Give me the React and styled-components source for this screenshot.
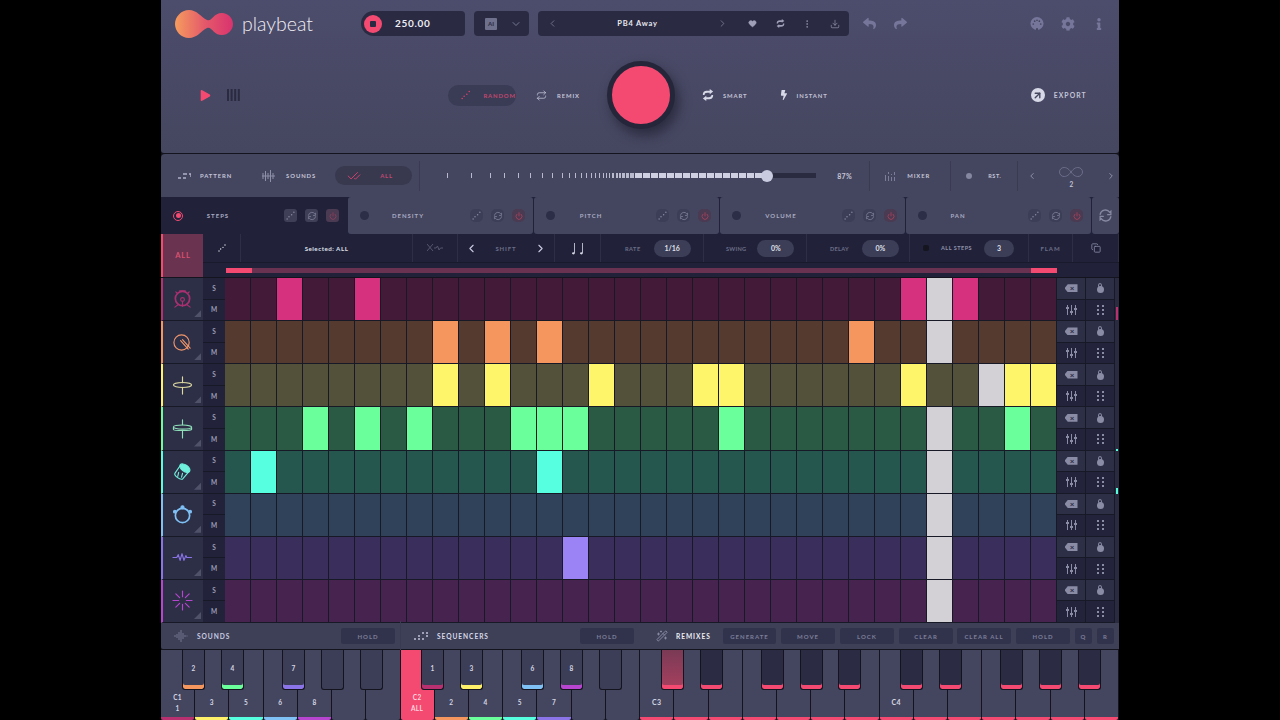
import React from 'react';
import styled, { createGlobalStyle } from 'styled-components';
import {
  ChevronLeft, ChevronRight, ChevronDown, Heart, MoreVertical, Download, CheckCheck, Power, Copy, Wand2, Repeat, ArrowUpRight,
} from 'lucide-react';
import { FaReply, FaShare, FaCog, FaInfo, FaBolt, FaPlay } from 'react-icons/fa';

const PINK = '#f44a72';

const tracks = [
  { color: '#b8306f', glyph: '#a83070', base: '#431a38', on: '#d6317f', hits: [2, 5, 26, 28], head: 27, icon: 'kick' },
  { color: '#f5965f', glyph: '#f0966a', base: '#553a30', on: '#f5965f', hits: [8, 10, 12, 24], head: 27, icon: 'snare' },
  { color: '#fff06a', glyph: '#dcd8a0', base: '#54513a', on: '#fff56a', hits: [8, 10, 14, 18, 19, 26, 30, 31], head: 29, icon: 'ride' },
  { color: '#6bff9c', glyph: '#8fe0b8', base: '#2b5a44', on: '#6bff9c', hits: [3, 5, 7, 11, 12, 13, 19, 30], head: 27, icon: 'hat' },
  { color: '#55ffe0', glyph: '#6ff0dc', base: '#25574f', on: '#55ffe0', hits: [1, 12], head: 27, icon: 'tom' },
  { color: '#7fc0f5', glyph: '#7fc0f5', base: '#2f4259', on: '#7fc0f5', hits: [], head: 27, icon: 'tamb' },
  { color: '#8b74e8', glyph: '#8b74e8', base: '#392e5c', on: '#9b82f5', hits: [13], head: 27, icon: 'wave' },
  { color: '#b845d0', glyph: '#b845d0', base: '#47234f', on: '#b845d0', hits: [], head: 27, icon: 'spark' },
];

const lanes = [
  { name: 'DENSITY', shift: 3 },
  { name: 'PITCH', shift: 0 },
  { name: 'VOLUME', shift: 4 },
  { name: 'PAN', shift: -5 },
];

const sliderTicks = [
  [0, 1], [23, 1], [18, 1], [13, 1], [13, 1], [11, 1], [11, 1], [9, 1], [9, 1], [6, 1], [5, 1], [5, 1], [4, 1],
  [4, 1], [3, 1], [3, 1], [3, 1], [2, 1], [2, 1], [2, 2], [2, 2], [1, 2], [1, 3], [1, 3], [1, 4],
];

const whiteKeys = [
  { note: 'C1', label: '1', strip: '#b8306f' }, { label: '3', strip: '#fff06a' }, { label: '5', strip: '#55ffe0' },
  { label: '6', strip: '#7fc0f5' }, { label: '8', strip: '#b845d0' }, {}, {},
  { note: 'C2', label: 'ALL', strip: PINK, lit: true }, { label: '2', strip: '#f5965f' }, { label: '4', strip: '#6bff9c' },
  { label: '5', strip: '#55ffe0' }, { label: '7', strip: '#8b74e8' }, {}, {},
  { tone: 'C3', strip: PINK }, { strip: PINK }, { strip: PINK }, { strip: PINK }, { strip: PINK }, { strip: PINK }, { strip: PINK },
  { tone: 'C4', strip: PINK }, { strip: PINK }, { strip: PINK }, { strip: PINK }, { strip: PINK }, { strip: PINK }, { strip: PINK },
];

const blackKeys = [
  { x: 21, label: '2', strip: '#f5965f' }, { x: 60, label: '4', strip: '#6bff9c' }, { x: 121, label: '7', strip: '#8b74e8' },
  { x: 160 }, { x: 199 },
  { x: 260, label: '1', strip: '#b8306f' }, { x: 299, label: '3', strip: '#fff06a' }, { x: 360, label: '6', strip: '#7fc0f5' },
  { x: 399, label: '8', strip: '#b845d0' }, { x: 438 },
  { x: 500, strip: PINK, glow: true }, { x: 539, strip: PINK }, { x: 600, strip: PINK }, { x: 639, strip: PINK }, { x: 677, strip: PINK },
  { x: 739, strip: PINK }, { x: 778, strip: PINK }, { x: 839, strip: PINK }, { x: 878, strip: PINK }, { x: 917, strip: PINK },
];

const GlobalStyle = createGlobalStyle`
  html, body {
    margin: 0;
    background: #000;
    font-family: "Lato", "Liberation Sans", sans-serif;
  }
`;

const Logo = () => (
  <svg width="58" height="30" viewBox="0 0 58 30">
    <defs>
      <linearGradient id="logoFill" x1="0" x2="1" y1="0" y2="0">
        <stop offset="0" stopColor="#f59c5e" />
        <stop offset="0.5" stopColor="#e55a6a" />
        <stop offset="1" stopColor="#d8336e" />
      </linearGradient>
    </defs>
    <path fill="url(#logoFill)" d="M14 1C22 1 26 8 32 11C37 13 38 4 47 4C53 4 58 9 58 15C58 21 53 26 47 26C38 26 37 17 32 19C26 22 22 29 14 29C6 29 0 22 0 15C0 8 6 1 14 1Z" />
  </svg>
);

const Dots = ({ color = '#c9cbe0', size = 12 }) => (
  <svg width={size} height={size} viewBox="0 0 12 12" fill={color}>
    <circle cx="1.500" cy="10.500" r="1" /><circle cx="4" cy="7.500" r="1" /><circle cx="7.500" cy="5" r="1" /><circle cx="10.500" cy="1.500" r="1" />
  </svg>
);

const Cycle = ({ size = 12, color = '#c9cbe0', width = 1.2 }) => (
  <svg width={size} height={size} viewBox="0 0 14 14" fill="none" stroke={color} strokeWidth={width} strokeLinecap="round">
    <path d="M2 6a5 5 0 0 1 9-2l1-1v3.200H9" /><path d="M12 8a5 5 0 0 1-9 2l-1 1V7.800h3" />
  </svg>
);

const Swap = ({ size = 12, color = '#c9cbe0' }) => (
  <svg width={size} height={size} viewBox="0 0 14 14" fill={color}>
    <path d="M1 7C1 3 3 2 6 2h3V0l4 3-4 3V4.500H6C4 4.500 3 5.500 3 7Z" />
    <path d="M13 7c0 4-2 5-5 5H5v2l-4-3 4-3v1.500h3c2 0 3-1 3-2.500Z" />
  </svg>
);

const Bars = ({ color = '#2a2b40' }) => (
  <svg width="13" height="12" viewBox="0 0 13 12" fill={color}>
    <rect x="0" width="2" height="12" /><rect x="3.600" width="2" height="12" /><rect x="7.200" width="2" height="12" /><rect x="10.800" width="2" height="12" />
  </svg>
);

const MidiPort = () => (
  <svg width="15" height="15" viewBox="0 0 15 15">
    <circle cx="7.500" cy="7.500" r="7" fill="#75769a" />
    <g fill="#45465f">
      <circle cx="3.500" cy="8" r="0.900" /><circle cx="5" cy="5" r="0.900" /><circle cx="7.500" cy="4" r="0.900" />
      <circle cx="10" cy="5" r="0.900" /><circle cx="11.500" cy="8" r="0.900" />
      <rect x="6.500" y="12.500" width="2" height="2" />
    </g>
  </svg>
);

const TrackGlyph = ({ kind, color }) => {
  const stroke = { fill: 'none', stroke: color, strokeWidth: 1.2, strokeLinecap: 'round', strokeLinejoin: 'round' };
  return (
    <svg width="21" height="21" viewBox="0 0 22 22" {...stroke}>
      {kind === 'kick' && (
        <>
          <circle cx="11" cy="10" r="7.500" strokeWidth="1.800" />
          <circle cx="11" cy="11" r="2" />
          <path d="M11 13v5M3 19l4-3M19 19l-4-3M4 3l2 2M18 3l-2 2M8 2h6" />
        </>
      )}
      {kind === 'snare' && (
        <>
          <circle cx="10" cy="11" r="8" />
          <path d="M9 9l8 9M11 8l8 9" />
        </>
      )}
      {kind === 'ride' && (
        <>
          <ellipse cx="11" cy="10.500" rx="9.500" ry="2.600" />
          <path d="M11 2v6M11 13v7" />
        </>
      )}
      {kind === 'hat' && (
        <>
          <ellipse cx="11" cy="9.500" rx="9.500" ry="2.200" />
          <path d="M1.500 10v2c0 1.500 19 1.500 19 0v-2M11 2v5M11 14v7" />
        </>
      )}
      {kind === 'tom' && (
        <>
          <ellipse cx="13.500" cy="7.500" rx="6" ry="3.400" transform="rotate(35 13.500 7.500)" fill={color} />
          <path d="M8.500 5 3 13c-1 2 5 7 8 6l6-7M7 12l-1 4M11 13l-1 4" />
        </>
      )}
      {kind === 'tamb' && (
        <>
          <circle cx="11" cy="12" r="7.500" strokeWidth="1.800" />
          <circle cx="11" cy="3.500" r="1.600" fill={color} />
          <circle cx="3" cy="8" r="1.400" fill={color} />
          <circle cx="19" cy="8" r="1.400" fill={color} />
        </>
      )}
      {kind === 'wave' && <path d="M1 11h4l1.500-3 2 6 2-7 2 7 2-5 1 2h5" />}
      {kind === 'spark' && (
        <path d="M11 1v6M11 15v6M1 11h6M15 11h6M4 4l4 4M18 4l-4 4M4 18l4-4M18 18l-4-4" />
      )}
    </svg>
  );
};

const Page = styled.div`
  width: 958px;
  height: 720px;
  margin: 0 auto;
  background: #14141f;
  overflow: hidden;
  display: flex;
  flex-direction: column;
`;

const Header = styled.header`
  height: 153px;
  flex: none;
  box-sizing: border-box;
  padding-top: 11px;
  background: linear-gradient(180deg, #4c4c6c 0%, #45465f 100%);
  border-bottom-left-radius: 3px;
  border-bottom-right-radius: 3px;
`;

const TopRow = styled.div`
  display: flex;
  align-items: center;
  height: 25px;
  padding-left: 14px;
  & > * { flex: none; }
`;

const Brand = styled.div`
  display: flex;
  align-items: center;
  width: 186px;
  gap: 9px;
`;

const BrandName = styled.span`
  font-size: 19.500px;
  font-weight: 300;
  color: #f0eef4;
`;

const TempoBox = styled.div`
  width: 104px;
  height: 25px;
  border-radius: 13px 4px 4px 13px;
  background: #2a2b42;
  display: flex;
  align-items: center;
  gap: 13px;
  padding-left: 3px;
  box-sizing: border-box;
`;

const StopButton = styled.div`
  width: 18px;
  height: 18px;
  border-radius: 50%;
  background: ${PINK};
  display: flex;
  align-items: center;
  justify-content: center;
  &::after {
    content: '';
    width: 6px;
    height: 6px;
    border-radius: 1px;
    background: #2a2b42;
  }
`;

const TempoValue = styled.span`
  color: #eeeef4;
  font-size: 10px;
  font-weight: 700;
  letter-spacing: 0.7px;
  margin-top: -2px;
`;

const DarkBox = styled.div`
  height: 25px;
  width: ${(p) => p.$w}px;
  margin-left: 9px;
  background: #2a2b42;
  border-radius: 4px;
  display: flex;
  align-items: center;
  box-sizing: border-box;
  padding: ${(p) => p.$pad || '0'};
  gap: ${(p) => p.$gap || '0'};
  color: #8b8ca8;
`;

const AiChip = styled.span`
  width: 12px;
  height: 12px;
  background: #70718c;
  border-radius: 1px;
  color: #2f3048;
  font-size: 6px;
  font-weight: 900;
  display: flex;
  align-items: center;
  justify-content: center;
`;

const PresetName = styled.span`
  width: 159px;
  text-align: center;
  color: #e9e9f0;
  font-size: 7.500px;
  font-weight: 700;
  letter-spacing: 0.8px;
`;

const HeadIcon = styled.span`
  display: flex;
  align-items: center;
  justify-content: center;
  margin-left: ${(p) => p.$ml || 0}px;
  width: ${(p) => p.$w || 14}px;
  color: ${(p) => p.$color || '#75769a'};
`;

const ModeRow = styled.div`
  display: flex;
  align-items: center;
  height: 68px;
  margin-top: 25px;
  padding-left: 38px;
  & > * { flex: none; }
`;

const ModeButton = styled.div`
  display: flex;
  align-items: center;
  gap: ${(p) => p.$gap || 10}px;
  margin-left: ${(p) => p.$ml || 0}px;
  ${(p) => p.$active && `
    height: 21px;
    width: 68px;
    box-sizing: border-box;
    padding-left: 13px;
    border-radius: 11px;
    background: #3a3b55;
  `}
`;

const Label = styled.span`
  font-size: ${(p) => p.$size || 5.900}px;
  font-weight: 700;
  letter-spacing: ${(p) => p.$ls || 0.900}px;
  color: ${(p) => p.$color || '#c4c5d8'};
  white-space: nowrap;
`;

const BigButton = styled.div`
  width: 58px;
  height: 58px;
  border-radius: 50%;
  background: ${PINK};
  border: 5px solid #25263a;
  margin-left: 27px;
  box-shadow: 4px 6px 12px rgba(20, 20, 35, 0.55);
`;

const ExportDisc = styled.span`
  width: 14px;
  height: 14px;
  border-radius: 50%;
  background: #d8d9e8;
  display: flex;
  align-items: center;
  justify-content: center;
`;

const Toolbar = styled.div`
  height: 43px;
  flex: none;
  margin-top: 1px;
  background: #44465f;
  border-radius: 4px 4px 0 0;
  display: flex;
  align-items: center;
  & > * { flex: none; }
`;

const ToolItem = styled.div`
  display: flex;
  align-items: center;
  gap: ${(p) => p.$gap || 9}px;
  margin-left: ${(p) => p.$ml || 0}px;
  color: #9a9bb6;
`;

const AllPill = styled.div`
  width: 77px;
  height: 19px;
  margin-left: 19px;
  border-radius: 10px;
  background: #38394f;
  display: flex;
  align-items: center;
  gap: 19px;
  padding-left: 12px;
  box-sizing: border-box;
`;

const Rule = styled.span`
  width: 1px;
  height: 30px;
  background: #3a3b52;
  margin-left: ${(p) => p.$ml || 0}px;
`;

const Slider = styled.div`
  position: relative;
  margin-left: 27px;
  width: 369px;
  height: 7px;
  display: flex;
  align-items: center;
`;

const Tick = styled.span`
  flex: none;
  height: 5px;
  width: ${(p) => p.$w}px;
  background: #b9bace;
`;

const Blocks = styled.div`
  display: flex;
  flex: none;
  gap: 1px;
  margin-left: 1px;
`;

const Block = styled.span`
  width: 7px;
  height: 5px;
  background: #cfd0e2;
`;

const SliderRest = styled.span`
  flex: 1;
  height: 5px;
  background: #2a2b40;
`;

const Knob = styled.span`
  position: absolute;
  left: 314px;
  top: -2.500px;
  width: 12px;
  height: 12px;
  border-radius: 50%;
  background: #c9cbe0;
`;

const ToolDot = styled.span`
  width: 6px;
  height: 6px;
  border-radius: 50%;
  background: #85869f;
`;

const InfinityBox = styled.div`
  margin-left: 18px;
  width: 32px;
  display: flex;
  flex-direction: column;
  align-items: center;
  gap: 4px;
  margin-top: 3px;
`;

const LaneRow = styled.div`
  height: 37px;
  flex: none;
  display: flex;
  background: #21223a;
`;

const StepsLane = styled.div`
  width: 186px;
  display: flex;
  align-items: center;
  padding-left: 12px;
  box-sizing: border-box;
`;

const RecordDot = styled.span`
  width: 10px;
  height: 10px;
  border-radius: 50%;
  border: 1.500px solid ${PINK};
  box-sizing: border-box;
  display: flex;
  align-items: center;
  justify-content: center;
  &::after {
    content: '';
    width: 5px;
    height: 5px;
    border-radius: 50%;
    background: ${PINK};
  }
`;

const Lane = styled.div`
  width: 185px;
  margin-left: 1px;
  background: #44465f;
  border-radius: 3px;
  display: flex;
  align-items: center;
  padding-left: 12px;
  box-sizing: border-box;
`;

const LaneDot = styled.span`
  width: 9px;
  height: 9px;
  border-radius: 50%;
  background: #2c2d46;
`;

const LaneTitle = styled.span`
  width: 72px;
  text-align: center;
  margin-left: ${(p) => p.$ml || 0}px;
  font-size: 6px;
  font-weight: 700;
  letter-spacing: 1px;
  color: #a9aac2;
`;

const LaneActions = styled.div`
  display: flex;
  gap: 8px;
  margin-left: auto;
  margin-right: 8px;
`;

const LaneButton = styled.span`
  width: 13px;
  height: 13px;
  border-radius: ${(p) => p.$radius || 5}px;
  background: ${(p) => p.$bg || '#3c3d57'};
  display: flex;
  align-items: center;
  justify-content: center;
`;

const RefreshTab = styled.div`
  flex: 1;
  margin-left: 1px;
  background: #44465f;
  border-radius: 3px;
  display: flex;
  align-items: center;
  justify-content: center;
`;

const OptionArea = styled.div`
  height: 43px;
  flex: none;
  display: flex;
`;

const AllTile = styled.div`
  width: 42px;
  box-sizing: border-box;
  border-left: 2px solid ${PINK};
  background: #6a3350;
  display: flex;
  align-items: center;
  justify-content: center;
`;

const OptionColumn = styled.div`
  flex: 1;
  display: flex;
  flex-direction: column;
  background: #21223a;
`;

const OptionBar = styled.div`
  height: 29px;
  display: flex;
  border-bottom: 1px solid #191a2b;
  box-sizing: border-box;
`;

const OptionCell = styled.div`
  width: ${(p) => p.$w}px;
  box-sizing: border-box;
  border-right: 1px solid #2e2f46;
  display: flex;
  align-items: center;
  justify-content: ${(p) => (p.$pl ? 'flex-start' : 'center')};
  padding-left: ${(p) => p.$pl || 0}px;
  gap: ${(p) => p.$gap || 0}px;
  color: #8c8da8;
`;

const ValuePill = styled.span`
  width: ${(p) => p.$w || 37}px;
  height: 17px;
  border-radius: 9px;
  background: #3c3d56;
  color: #dfe0ea;
  font-size: 7px;
  font-weight: 700;
  display: flex;
  align-items: center;
  justify-content: center;
`;

const SquareDot = styled.span`
  width: 6px;
  height: 6px;
  border-radius: 2px;
  background: #14151f;
`;

const ProgressRow = styled.div`
  height: 14px;
  display: flex;
  align-items: center;
  padding-left: 23px;
`;

const ProgressTrack = styled.div`
  width: 831px;
  height: 5px;
  background: #693250;
  display: flex;
  justify-content: space-between;
`;

const ProgressHandle = styled.span`
  width: 26px;
  background: ${PINK};
`;

const GridArea = styled.div`
  margin-top: 1px;
  flex: none;
  display: flex;
  background: #181927;
`;

const TrackColumn = styled.div`
  flex: 1;
`;

const TrackRow = styled.div`
  height: 43.125px;
  display: flex;
`;

const TrackTile = styled.div`
  position: relative;
  width: 42px;
  box-sizing: border-box;
  border-left: 2px solid ${(p) => p.$color};
  border-bottom: 1px solid #181927;
  background: #2d2f47;
  display: flex;
  align-items: center;
  justify-content: center;
  padding-right: 2px;
  &::after {
    content: '';
    position: absolute;
    right: 2px;
    bottom: 3px;
    width: 7px;
    height: 7px;
    background: #50526a;
    clip-path: polygon(100% 0, 100% 100%, 0 100%);
  }
`;

const SoloColumn = styled.div`
  width: 22px;
  display: flex;
  flex-direction: column;
`;

const SoloCell = styled.div`
  flex: 1;
  background: #22233a;
  border-bottom: 1px solid #181927;
  display: flex;
  align-items: center;
  justify-content: center;
  color: #9c9db6;
  font-size: 6.500px;
  font-weight: 700;
`;

const Steps = styled.div`
  display: grid;
  grid-template-columns: repeat(32, 26px);
  width: 832px;
`;

const Step = styled.div`
  background: ${(p) => p.$bg};
  border-right: 1px solid #181927;
  border-bottom: 1px solid #181927;
`;

const SideColumn = styled.div`
  width: 58px;
  display: grid;
  grid-template-columns: 1fr 1fr;
  grid-template-rows: 1fr 1fr;
`;

const SideCell = styled.div`
  background: ${(p) => (p.$top ? '#2d2f47' : '#23243b')};
  border-right: 1px solid #181927;
  border-bottom: 1px solid #181927;
  display: flex;
  align-items: center;
  justify-content: center;
`;

const EraseTag = styled.span`
  width: 13px;
  height: 8px;
  background: #8a8ba5;
  clip-path: polygon(25% 0, 100% 0, 100% 100%, 25% 100%, 0 50%);
  color: #2d2f47;
  font-size: 8px;
  font-weight: 900;
  line-height: 8px;
  text-align: center;
  text-indent: 2px;
`;

const LockBlob = styled.span`
  width: 7px;
  height: 7px;
  margin-top: 3px;
  border-radius: 50%;
  background: #8a8ba5;
  position: relative;
  &::before {
    content: '';
    position: absolute;
    left: 1.500px;
    top: -3px;
    width: 4px;
    height: 5px;
    border-radius: 50%;
    border: 1px solid #8a8ba5;
    box-sizing: border-box;
  }
`;

const GripDots = styled.span`
  display: grid;
  grid-template-columns: 2px 2px;
  gap: 2px 3px;
  & > i {
    width: 2px;
    height: 2px;
    background: #8a8ba5;
  }
`;

const ScrollRail = styled.div`
  width: 4px;
  background: #2a2b40;
  position: relative;
`;

const ScrollMark = styled.span`
  position: absolute;
  left: 1px;
  width: 2px;
  height: ${(p) => p.$h}px;
  top: ${(p) => p.$top}px;
  background: ${(p) => p.$color};
`;

const BottomBar = styled.div`
  height: 26px;
  flex: none;
  display: flex;
  align-items: center;
  background: #3e4058;
  border-bottom-left-radius: 2px;
  & > * { flex: none; }
`;

const BarGroup = styled.div`
  display: flex;
  align-items: center;
  gap: ${(p) => p.$gap || 9}px;
  margin-left: ${(p) => p.$ml || 0}px;
`;

const BarTitle = styled.span`
  width: ${(p) => p.$w}px;
  font-size: 6.600px;
  font-weight: 700;
  letter-spacing: 0.950px;
  color: ${(p) => p.$color || '#c9cbe0'};
  white-space: nowrap;
`;

const BarButton = styled.span`
  width: ${(p) => p.$w || 54}px;
  height: 16px;
  margin-left: ${(p) => p.$ml ?? 5}px;
  border-radius: 2px;
  background: #31334d;
  color: #7d7e98;
  font-size: 6px;
  font-weight: 700;
  letter-spacing: 1px;
  display: flex;
  align-items: center;
  justify-content: center;
`;

const Keyboard = styled.div`
  position: relative;
  height: 70px;
  flex: none;
  margin-top: 1px;
  display: flex;
  background: #14141f;
`;

const WhiteKey = styled.div`
  flex: 1;
  margin-right: 1px;
  box-sizing: border-box;
  border-radius: 0 0 2px 2px;
  background: ${(p) => (p.$lit ? PINK : '#44465f')};
  border-bottom: 3px solid ${(p) => p.$strip || '#44465f'};
  display: flex;
  flex-direction: column;
  justify-content: flex-end;
  align-items: center;
  gap: 4px;
  padding-bottom: ${(p) => (p.$high ? 5 : 11)}px;
  color: ${(p) => (p.$lit ? '#ffd5de' : '#d5d6e4')};
  font-size: 6.500px;
  font-weight: 700;
  letter-spacing: 0.3px;
`;

const ToneName = styled.span`
  align-self: flex-start;
  margin-left: 12px;
  font-size: 7px;
  font-weight: 700;
  color: #d5d6e4;
`;

const BlackKey = styled.div`
  position: absolute;
  top: 0;
  width: 23px;
  height: 40px;
  box-sizing: border-box;
  background: ${(p) => (p.$glow ? 'linear-gradient(180deg, #7a3a55, #a8405f)' : p.$strip === PINK ? '#2b2c43' : '#3c3e57')};
  border: 1px solid #14141f;
  border-top: none;
  border-radius: 0 0 3px 3px;
  box-shadow: inset 0 -4px 0 ${(p) => p.$strip || '#3c3e57'};
  display: flex;
  align-items: center;
  justify-content: center;
  padding-bottom: 3px;
  color: #d5d6e4;
  font-size: 6.500px;
  font-weight: 700;
`;

export default function App() {
  return (
    <Page>
      <GlobalStyle />
      <Header>
        <TopRow>
          <Brand>
            <Logo />
            <BrandName>playbeat</BrandName>
          </Brand>
          <TempoBox>
            <StopButton />
            <TempoValue>250.00</TempoValue>
          </TempoBox>
          <DarkBox $w={55} $pad="0 0 0 11px" $gap="13px">
            <AiChip>AI</AiChip>
            <ChevronDown size={12} strokeWidth={1.5} />
          </DarkBox>
          <DarkBox $w={311} $pad="0 0 0 9px">
            <ChevronLeft size={11} strokeWidth={1.5} />
            <PresetName>PB4 Away</PresetName>
            <HeadIcon $w={11} $color="#8b8ca8"><ChevronRight size={11} strokeWidth={1.5} /></HeadIcon>
            <HeadIcon $ml={19} $w={10} $color="#a0a1b8"><Heart size={9} fill="#a0a1b8" strokeWidth={1} /></HeadIcon>
            <HeadIcon $ml={18} $w={10} $color="#a0a1b8"><Swap size={9} color="#a0a1b8" /></HeadIcon>
            <HeadIcon $ml={17} $w={10} $color="#a0a1b8"><MoreVertical size={10} strokeWidth={1.5} /></HeadIcon>
            <HeadIcon $ml={18} $w={10} $color="#a0a1b8"><Download size={10} strokeWidth={1.5} /></HeadIcon>
          </DarkBox>
          <HeadIcon $ml={13}><FaReply size={13} /></HeadIcon>
          <HeadIcon $ml={17}><FaShare size={13} /></HeadIcon>
          <HeadIcon $ml={123}><MidiPort /></HeadIcon>
          <HeadIcon $ml={17}><FaCog size={14} /></HeadIcon>
          <HeadIcon $ml={17}><FaInfo size={12} /></HeadIcon>
        </TopRow>
        <ModeRow>
          <HeadIcon $w={12} $color={PINK}><FaPlay size={11} /></HeadIcon>
          <HeadIcon $ml={16} $w={13}><Bars /></HeadIcon>
          <ModeButton $ml={208} $active $gap={13}>
            <Dots color="#d9416e" size={10} />
            <Label $color="#c2486f">RANDOM</Label>
          </ModeButton>
          <ModeButton $ml={20}>
            <Repeat size={11} color="#c9cbe0" strokeWidth={1.6} />
            <Label>REMIX</Label>
          </ModeButton>
          <BigButton />
          <ModeButton $ml={27} $gap={9}>
            <Swap size={12} color="#d8d9e8" />
            <Label>SMART</Label>
          </ModeButton>
          <ModeButton $ml={31} $gap={8}>
            <FaBolt size={10} color="#d8d9e8" />
            <Label>INSTANT</Label>
          </ModeButton>
          <ModeButton $ml={203} $gap={9}>
            <ExportDisc><ArrowUpRight size={11} color="#45465f" strokeWidth={3} /></ExportDisc>
            <Label $size={6.800} $ls={1.100}>EXPORT</Label>
          </ModeButton>
        </ModeRow>
      </Header>

      <Toolbar>
        <ToolItem $ml={17}>
          <svg width="13" height="6" viewBox="0 0 13 6" stroke="#b0b1c8" strokeWidth="1.400" fill="none"><path d="M0 5h3M5 5h3M5 1h4M11 1h2v3" /></svg>
          <Label>PATTERN</Label>
        </ToolItem>
        <ToolItem $ml={30} $gap={11}>
          <svg width="13" height="12" viewBox="0 0 13 12" stroke="#8e8fa9" fill="none"><path d="M1 3v6M3.500 1v10M6 3v6M8.500 0v12M11 3v6M0 6h13" /></svg>
          <Label>SOUNDS</Label>
        </ToolItem>
        <AllPill>
          <CheckCheck size={14} color="#d9416e" strokeWidth={1.6} />
          <Label $color="#c2486f">ALL</Label>
        </AllPill>
        <Rule $ml={7} />
        <Slider>
          {sliderTicks.map(([gap, w], i) => (
            <Tick key={i} $w={w} style={{ marginLeft: gap }} />
          ))}
          <Blocks>
            {Array.from({ length: 17 }, (_, i) => <Block key={i} />)}
          </Blocks>
          <SliderRest />
          <Knob />
        </Slider>
        <ToolItem $ml={21}><Label $size={7} $ls={0.400}>87%</Label></ToolItem>
        <Rule $ml={17} />
        <ToolItem $ml={15} $gap={12}>
          <svg width="10" height="10" viewBox="0 0 10 10" fill="#7c7d98"><path d="M0 4h1v6H0zM3 1h1v2H3zM3 5h1v5H3zM6 3h1v1H6zM6 6h1v4H6zM9 1h1v3H9zM9 6h1v4H9z" /></svg>
          <Label>MIXER</Label>
        </ToolItem>
        <Rule $ml={20} />
        <ToolItem $ml={15} $gap={16}>
          <ToolDot />
          <Label $size={5.500} $ls={0.600}>RST.</Label>
        </ToolItem>
        <Rule $ml={16} />
        <ToolItem $ml={9}><ChevronLeft size={10} /></ToolItem>
        <InfinityBox>
          <svg width="24" height="10" viewBox="0 0 24 10" fill="none" stroke="#6d6e8a" strokeWidth="1"><path d="M12 5C9 1 7 .5 5 .5a4.500 4.500 0 0 0 0 9c2 0 4-.5 7-4.500s5-4.500 7-4.500a4.500 4.500 0 0 1 0 9c-2 0-4-.5-7-4.500Z" /></svg>
          <Label $size={6.500} $ls={0.100}>2</Label>
        </InfinityBox>
        <ToolItem $ml={19}><ChevronRight size={10} /></ToolItem>
      </Toolbar>

      <LaneRow>
        <StepsLane>
          <RecordDot />
          <LaneTitle $ml={-1}>STEPS</LaneTitle>
          <LaneActions>
            <LaneButton $radius={3} $bg="#3f4058"><Dots color="#8788a2" size={9} /></LaneButton>
            <LaneButton $radius={3} $bg="#3f4058"><Cycle size={10} color="#7b7c96" /></LaneButton>
            <LaneButton $radius={3} $bg="#4a3a52"><Power size={8} color="#9c4460" /></LaneButton>
          </LaneActions>
        </StepsLane>
        {lanes.map((lane) => (
          <Lane key={lane.name}>
            <LaneDot />
            <LaneTitle style={{ marginLeft: lane.shift }}>{lane.name}</LaneTitle>
            <LaneActions>
              <LaneButton><Dots color="#8788a2" size={9} /></LaneButton>
              <LaneButton><Cycle size={10} color="#7b7c96" /></LaneButton>
              <LaneButton $bg="#4a3a52"><Power size={8} color="#c4455f" /></LaneButton>
            </LaneActions>
          </Lane>
        ))}
        <RefreshTab><Cycle size={15} color="#8788a2" /></RefreshTab>
      </LaneRow>

      <OptionArea>
        <AllTile><Label $color="#d9516f" $size={7.500}>ALL</Label></AllTile>
        <OptionColumn>
          <OptionBar>
            <OptionCell $w={38}><Dots color="#e8e8f0" size={8} /></OptionCell>
            <OptionCell $w={172}><Label $color="#dfe0ea" $size={6.200} $ls={0.500}>Selected: ALL</Label></OptionCell>
            <OptionCell $w={45}>
              <svg width="16" height="8" viewBox="0 0 16 8" fill="none" stroke="#55566f" strokeWidth="1"><path d="M0 0l6 7M6 0 0 7M7 4h2l1.500-2 1.500 4 1.500-2H16" /></svg>
            </OptionCell>
            <OptionCell $w={97} $gap={17}>
              <ChevronLeft size={13} color="#c9cbe0" />
              <Label $color="#6d6e88" $size={6}>SHIFT</Label>
              <ChevronRight size={13} color="#c9cbe0" />
            </OptionCell>
            <OptionCell $w={46}>
              <svg width="12" height="13" viewBox="0 0 12 13" fill="#d8d9e8"><path d="M2 1h.800v10H2zM10 1h.800v10H10z" /><ellipse cx="1.400" cy="11.300" rx="1.400" ry="1.100" /><ellipse cx="9.400" cy="11.300" rx="1.400" ry="1.100" /></svg>
            </OptionCell>
            <OptionCell $w={103} $pl={24} $gap={13}><Label $color="#6d6e88" $size={5.600} $ls={0.500}>RATE</Label><ValuePill>1/16</ValuePill></OptionCell>
            <OptionCell $w={103} $pl={22} $gap={11}><Label $color="#6d6e88" $size={5.600} $ls={0.300}>SWING</Label><ValuePill>0%</ValuePill></OptionCell>
            <OptionCell $w={103} $pl={23} $gap={13}><Label $color="#6d6e88" $size={5.600} $ls={0.300}>DELAY</Label><ValuePill>0%</ValuePill></OptionCell>
            <OptionCell $w={119} $pl={13} $gap={12}>
              <SquareDot />
              <Label $color="#9192ab" $size={5.500} $ls={0.500}>ALL STEPS</Label>
              <ValuePill $w={30}>3</ValuePill>
            </OptionCell>
            <OptionCell $w={44}><Label $color="#6d6e88" $size={6}>FLAM</Label></OptionCell>
            <OptionCell $w={46}><Copy size={10} color="#8788a2" /></OptionCell>
          </OptionBar>
          <ProgressRow>
            <ProgressTrack><ProgressHandle /><ProgressHandle /></ProgressTrack>
          </ProgressRow>
        </OptionColumn>
      </OptionArea>

      <GridArea>
        <TrackColumn>
          {tracks.map((track) => (
            <TrackRow key={track.icon}>
              <TrackTile $color={track.color}><TrackGlyph kind={track.icon} color={track.glyph} /></TrackTile>
              <SoloColumn>
                <SoloCell>S</SoloCell>
                <SoloCell>M</SoloCell>
              </SoloColumn>
              <Steps>
                {Array.from({ length: 32 }, (_, i) => {
                  let bg = track.base;
                  if (track.hits.includes(i)) bg = track.on;
                  if (track.head === i) bg = '#d3d0d6';
                  return <Step key={i} $bg={bg} />;
                })}
              </Steps>
              <SideColumn>
                <SideCell $top><EraseTag>×</EraseTag></SideCell>
                <SideCell $top><LockBlob /></SideCell>
                <SideCell>
                  <svg width="11" height="10" viewBox="0 0 11 10" stroke="#8a8ba5" strokeWidth="1"><path d="M1.500 0v10M5.500 0v10M9.500 0v10" /><path d="M0 3h3M4 7h3M8 4h3" strokeWidth="1.800" /></svg>
                </SideCell>
                <SideCell>
                  <GripDots><i /><i /><i /><i /><i /><i /></GripDots>
                </SideCell>
              </SideColumn>
            </TrackRow>
          ))}
        </TrackColumn>
        <ScrollRail>
          <ScrollMark $top={29} $h={13} $color="#b8306f" />
          <ScrollMark $top={171} $h={2} $color="#55ffe0" />
          <ScrollMark $top={210} $h={6} $color="#55ffe0" />
        </ScrollRail>
      </GridArea>

      <BottomBar>
        <BarGroup $ml={13}>
          <svg width="14" height="12" viewBox="0 0 14 12" stroke="#73748f" fill="none"><path d="M1 5v2M3 4v4M5 2v8M7 0v12M9 3v6M11 5v2M13 5.500v1" /></svg>
          <BarTitle $w={33}>SOUNDS</BarTitle>
        </BarGroup>
        <BarButton $ml={111}>HOLD</BarButton>
        <Rule $ml={5} />
        <BarGroup $ml={13} $gap={7}>
          <svg width="16" height="9" viewBox="0 0 16 9" fill="#a0a1b8"><rect x="0" y="6" width="2" height="2" /><rect x="4" y="3" width="2" height="2" /><rect x="4" y="6" width="2" height="2" /><rect x="8" y="0" width="2" height="2" /><rect x="8" y="6" width="2" height="2" /><rect x="12" y="3" width="2" height="2" /><rect x="12" y="0" width="2" height="2" /></svg>
          <BarTitle $w={55} $color="#d8d9e8">SEQUENCERS</BarTitle>
        </BarGroup>
        <BarButton $ml={88}>HOLD</BarButton>
        <BarGroup $ml={22} $gap={8}>
          <Wand2 size={12} color="#8788a2" />
          <BarTitle $w={36} $color="#eeeef4">REMIXES</BarTitle>
        </BarGroup>
        <BarButton $ml={11} $w={53}>GENERATE</BarButton>
        <BarButton>MOVE</BarButton>
        <BarButton>LOCK</BarButton>
        <BarButton>CLEAR</BarButton>
        <BarButton $ml={4}>CLEAR ALL</BarButton>
        <BarButton>HOLD</BarButton>
        <BarButton $w={17}>Q</BarButton>
        <BarButton $w={17}>R</BarButton>
      </BottomBar>

      <Keyboard>
        {whiteKeys.map((key, i) => (
          <WhiteKey key={i} $strip={key.strip} $lit={key.lit} $high={!!key.note}>
            {key.tone && <ToneName>{key.tone}</ToneName>}
            {key.note && <span>{key.note}</span>}
            {key.label && <span>{key.label}</span>}
          </WhiteKey>
        ))}
        {blackKeys.map((key) => (
          <BlackKey key={key.x} style={{ left: key.x }} $strip={key.strip} $glow={key.glow}>{key.label}</BlackKey>
        ))}
      </Keyboard>
    </Page>
  );
}
